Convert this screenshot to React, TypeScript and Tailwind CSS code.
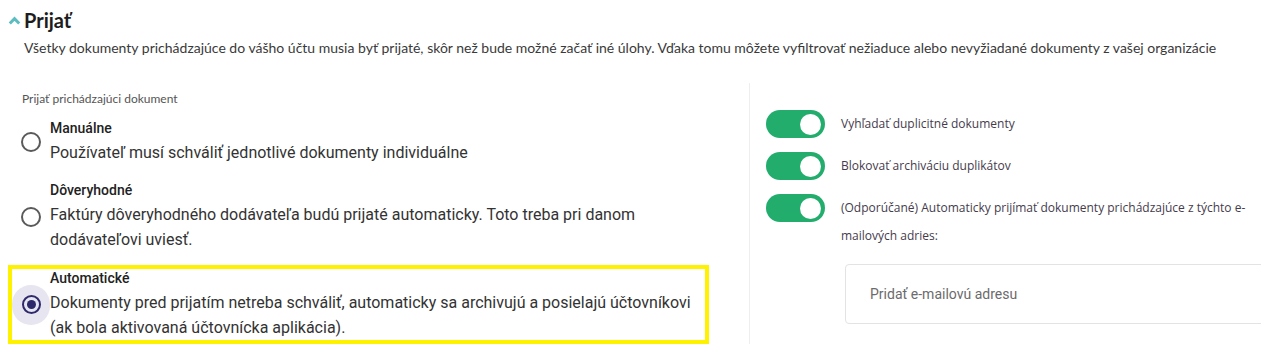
import { useState } from 'react';

type Mode = 'manual' | 'trusted' | 'auto';

const options: { id: Mode; title: string; text: string }[] = [
  {
    id: 'manual',
    title: 'Manuálne',
    text: 'Používateľ musí schváliť jednotlivé dokumenty individuálne',
  },
  {
    id: 'trusted',
    title: 'Dôveryhodné',
    text: 'Faktúry dôveryhodného dodávateľa budú prijaté automaticky. Toto treba pri danom dodávateľovi uviesť.',
  },
  {
    id: 'auto',
    title: 'Automatické',
    text: 'Dokumenty pred prijatím netreba schváliť, automaticky sa archivujú a posielajú účtovníkovi (ak bola aktivovaná účtovnícka aplikácia).',
  },
];

function Radio({ checked }: { checked: boolean }) {
  return (
    <div className="w-[38px] flex items-center justify-center shrink-0">
      {checked ? (
        <div className="w-10 h-10 rounded-full bg-[#e7e5ef] flex items-center justify-center">
          <div className="w-[19px] h-[19px] rounded-full border-2 border-[#2c2a6c] flex items-center justify-center">
            <div className="w-[9px] h-[9px] rounded-full bg-[#2c2a6c]" />
          </div>
        </div>
      ) : (
        <div className="w-[20px] h-[20px] rounded-full border-2 border-[#5a5a5a]" />
      )}
    </div>
  );
}

function Toggle({ on }: { on: boolean }) {
  return (
    <div
      className={`w-[59px] h-[28px] rounded-full flex items-center px-[4px] shrink-0 ${
        on ? 'bg-[#22ad6d] justify-end' : 'bg-gray-300 justify-start'
      }`}
    >
      <div className="w-[21px] h-[21px] rounded-full bg-white" />
    </div>
  );
}

export default function App() {
  const [mode, setMode] = useState<Mode>('auto');
  const [toggles, setToggles] = useState([true, true, true]);

  const labels = [
    'Vyhľadať duplicitné dokumenty',
    'Blokovať archiváciu duplikátov',
    '(Odporúčané) Automaticky prijímať dokumenty prichádzajúce z týchto e-mailových adries:',
  ];

  return (
    <div className="w-[1261px] h-[349px] overflow-hidden bg-white pt-2">
      {/* Header */}
      <div className="flex items-center h-6 pl-[8px]">
        <svg width="13" height="9" viewBox="0 0 13 9" className="mr-[3px] mt-[1px]">
          <polyline
            points="1.8,7.5 6.5,2.6 11.2,7.5"
            fill="none"
            stroke="#5bbdc0"
            strokeWidth="3"
          />
        </svg>
        <h2 className="text-[20px] leading-6 font-bold text-[#1d1d1d] font-['Lato',sans-serif]">
          Prijať
        </h2>
      </div>
      <p className="mt-[6px] pl-6 text-[14px] leading-5 text-[#3a3a3a] whitespace-nowrap font-['Lato',sans-serif]">
        Všetky dokumenty prichádzajúce do vášho účtu musia byť prijaté, skôr než bude možné začať iné úlohy. Vďaka tomu môžete vyfiltrovať nežiaduce alebo nevyžiadané dokumenty z vašej organizácie
      </p>

      <div className="flex mt-[25px]">
        {/* Left: radio options */}
        <div className="w-[749px] shrink-0 pt-2 pl-2">
          <p className="ml-[14px] text-[12px] leading-4 text-[#555] font-['Lato',sans-serif]">
            Prijať prichádzajúci dokument
          </p>
          <div className="mt-2 flex flex-col gap-2">
            {options.map((o) => (
              <label
                key={o.id}
                onClick={() => setMode(o.id)}
                className={`w-[701px] flex items-center border-4 cursor-pointer ${
                  mode === o.id ? 'border-[#fff200]' : 'border-transparent'
                } ${o.id === 'auto' ? 'mt-px' : ''}`}
              >
                <Radio checked={mode === o.id} />
                <div className="font-['Roboto',sans-serif]">
                  <p className="text-[14px] leading-[18px] font-medium text-[#222] mb-[3px]">
                    {o.title}
                  </p>
                  <p className="text-[16px] leading-[25px] text-[#333]">{o.text}</p>
                </div>
              </label>
            ))}
          </div>
        </div>

        {/* Right: toggles */}
        <div className="flex-1 border-l border-[#eeeeee] pl-4 pt-[27px] font-['Open_Sans',sans-serif]">
          <div className="flex flex-col gap-[14px]">
            {labels.map((l, i) => (
              <div
                key={l}
                className="flex items-start gap-4 cursor-pointer"
                onClick={() =>
                  setToggles((t) => t.map((v, j) => (j === i ? !v : v)))
                }
              >
                <Toggle on={toggles[i]} />
                <span className="w-[412px] text-[12px] leading-[28px] text-[#453b4d]">
                  {l}
                </span>
              </div>
            ))}
          </div>
          <div className="mt-[14px] ml-[79px] w-[440px] h-[60px] border border-[#e3e3e3] rounded-[4px] flex items-center px-6">
            <input
              className="w-full outline-none text-[14px] text-[#555] placeholder:text-[#6b6b6b] font-['Roboto',sans-serif]"
              placeholder="Pridať e-mailovú adresu"
            />
          </div>
        </div>
      </div>
    </div>
  );
}
